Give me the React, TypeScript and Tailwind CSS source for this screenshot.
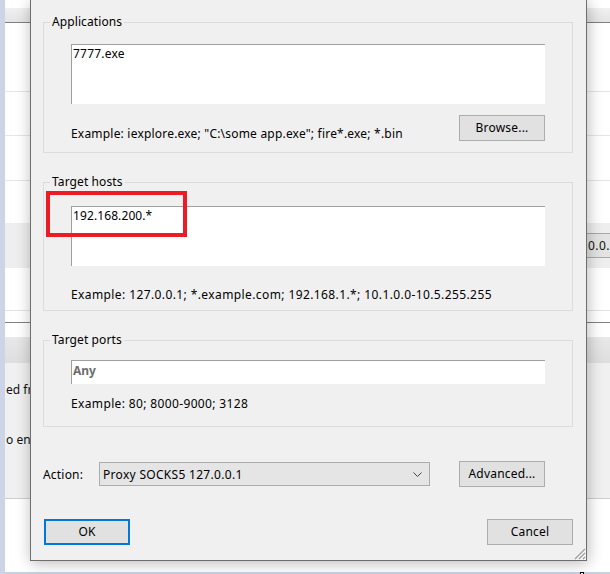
import React from "react";

function Line({ c }: { c: string }) {
  return <div className={`h-[1px] ${c}`} />;
}

function BackgroundWindow() {
  return (
    <div className="flex flex-col">
      <div className="h-[8px] bg-white" />
      <div className="h-[14px] bg-gradient-to-b from-[#f0f0f0] to-[#e4e4e4]" />
      <Line c="bg-[#7f7f7f]" />
      <div className="h-[68px] bg-white" />
      <Line c="bg-[#e6e6e6]" />
      <div className="h-[43px] bg-white" />
      <Line c="bg-[#e6e6e6]" />
      <div className="h-[44px] bg-white" />
      <Line c="bg-[#e6e6e6]" />
      <div className="h-[42px] bg-white" />
      <div className="h-[45px] bg-[#eeeeee] flex items-center justify-end">
        <div className="w-[30px] h-[25px] border-y border-[#a9a9a9] bg-[#e3e3e3] pl-[8px] leading-[23px] tracking-[0.4px] whitespace-nowrap overflow-hidden text-[#111]">
          0.0.
        </div>
      </div>
      <div className="h-[42px] bg-white" />
      <Line c="bg-[#e3e3e3]" />
      <div className="h-[11px] bg-white" />
      <Line c="bg-[#808080]" />
      <div className="h-[14px] bg-white" />
      <div className="h-[26px] bg-gradient-to-b from-[#e8e8e8] to-[#dedede]" />
      <div className="h-[135px] bg-[#f0f0f0] pl-[1px] text-[#111]">
        <div className="mt-[19px] whitespace-nowrap">ed fr</div>
        <div className="mt-[34px] whitespace-nowrap">o en</div>
      </div>
      <Line c="bg-[#cfcfcf]" />
    </div>
  );
}

function Group({
  label,
  className = "",
  children,
}: {
  label: string;
  className?: string;
  children: React.ReactNode;
}) {
  return (
    <div className={`border border-[#dcdcdc] ${className}`}>
      <div className="-mt-[9px] ml-[6px] w-fit bg-[#f0f0f0] px-[2px] leading-[16px] tracking-[0.1px]">
        {label}
      </div>
      {children}
    </div>
  );
}

function Button({
  children,
  primary = false,
  className = "",
}: {
  children: React.ReactNode;
  primary?: boolean;
  className?: string;
}) {
  return (
    <div
      className={`w-[86px] h-[26px] flex items-center justify-center bg-[#e1e1e1] tracking-[0.2px] ${
        primary ? "border-2 border-[#0078d7]" : "border border-[#adadad]"
      } ${className}`}
    >
      {children}
    </div>
  );
}

function Dialog() {
  return (
    <div className="absolute left-[30px] top-0 w-[557px] border-x border-b border-[#6e6e6e] bg-[#f0f0f0] shadow-[1px_2px_14px_rgba(0,0,0,0.28)] pt-[22px] pl-[12px] pr-[13px] pb-[15px] flex flex-col">
      <Group label="Applications" className="pb-[11px]">
        <div className="ml-[27px] mt-[14px] w-[474px] h-[60px] bg-white border-t border-l border-[#a0a0a0] pl-[1px] pt-[1px] tracking-[0.2px]">
          7777.exe
        </div>
        <div className="ml-[27px] mt-[11px] w-[474px] flex items-end justify-between">
          <div className="tracking-[0.2px] -mb-[1px]">
            Example: iexplore.exe; "C:\some app.exe"; fire*.exe; *.bin
          </div>
          <Button>Browse...</Button>
        </div>
      </Group>

      <Group label="Target hosts" className="mt-[29px] pb-[7px]">
        <div className="ml-[27px] mt-[16px] w-[474px] h-[60px] bg-white border-t border-l border-[#a0a0a0] pl-[1px] pt-[1px] tracking-[0.1px]">
          192.168.200.*
        </div>
        <div className="ml-[27px] mt-[21px] tracking-[0.4px]">
          Example: 127.0.0.1; *.example.com; 192.168.1.*; 10.1.0.0-10.5.255.255
        </div>
      </Group>

      <Group label="Target ports" className="mt-[29px] pb-[14px]">
        <div className="ml-[27px] mt-[12px] w-[474px] h-[24px] bg-white border-t border-l border-[#a0a0a0] pl-[1px] pb-[3px] flex items-center font-bold text-[#6d6d6d]">
          Any
        </div>
        <div className="ml-[27px] mt-[12px] tracking-[0.36px]">
          Example: 80; 8000-9000; 3128
        </div>
      </Group>

      <div className="mt-[34px] h-[26px] flex items-center">
        <div className="w-[56px] pt-[1px] tracking-[0.2px]">Action:</div>
        <div className="w-[331px] h-[24px] bg-[#e5e5e5] border border-[#acacac] flex items-center pl-[3px]">
          <span className="tracking-[0.3px] pt-[1px]">Proxy SOCKS5 127.0.0.1</span>
          <svg
            className="ml-auto mr-[7px]"
            width="9"
            height="5"
            viewBox="0 0 9 5"
          >
            <path d="M0.5 0.5 L4.5 4.5 L8.5 0.5" fill="none" stroke="#444" strokeWidth="1" />
          </svg>
        </div>
        <Button className="ml-[29px]">Advanced...</Button>
      </div>

      <div className="mt-[32px] flex justify-between">
        <Button primary className="ml-[1px]">
          OK
        </Button>
        <Button>Cancel</Button>
      </div>

      {/* red highlight annotation */}
      <div className="absolute left-[15px] top-[191px] w-[141px] h-[46px] border-4 border-[#ed1c24]" />

      {/* resize grip */}
      <svg className="absolute right-0 bottom-0" width="14" height="14" viewBox="0 0 14 14">
        <path d="M13 3 L3 13 M13 7 L7 13 M13 11 L11 13" stroke="#a0a0a0" strokeWidth="1.4" fill="none" />
        <path d="M14 4 L4 14 M14 8 L8 14 M14 12 L12 14" stroke="#ffffff" strokeWidth="1" fill="none" />
      </svg>
    </div>
  );
}

export default function App() {
  return (
    <div className="relative w-[610px] h-[574px] overflow-hidden bg-white font-['Noto_Sans',sans-serif] text-[12px] leading-[16px] text-black">
      <div className="flex h-full">
        <div className="w-[5px] bg-[#cbd5e5]" />
        <div className="flex-1 flex flex-col">
          <BackgroundWindow />
          <div className="flex-1 bg-white" />
          <div className="h-[2px] bg-[#c6d0e0] flex justify-end">
            <div className="w-[4px] h-[2px] mr-[26px] bg-white border-x border-t border-black" />
          </div>
        </div>
      </div>
      <Dialog />
    </div>
  );
}
